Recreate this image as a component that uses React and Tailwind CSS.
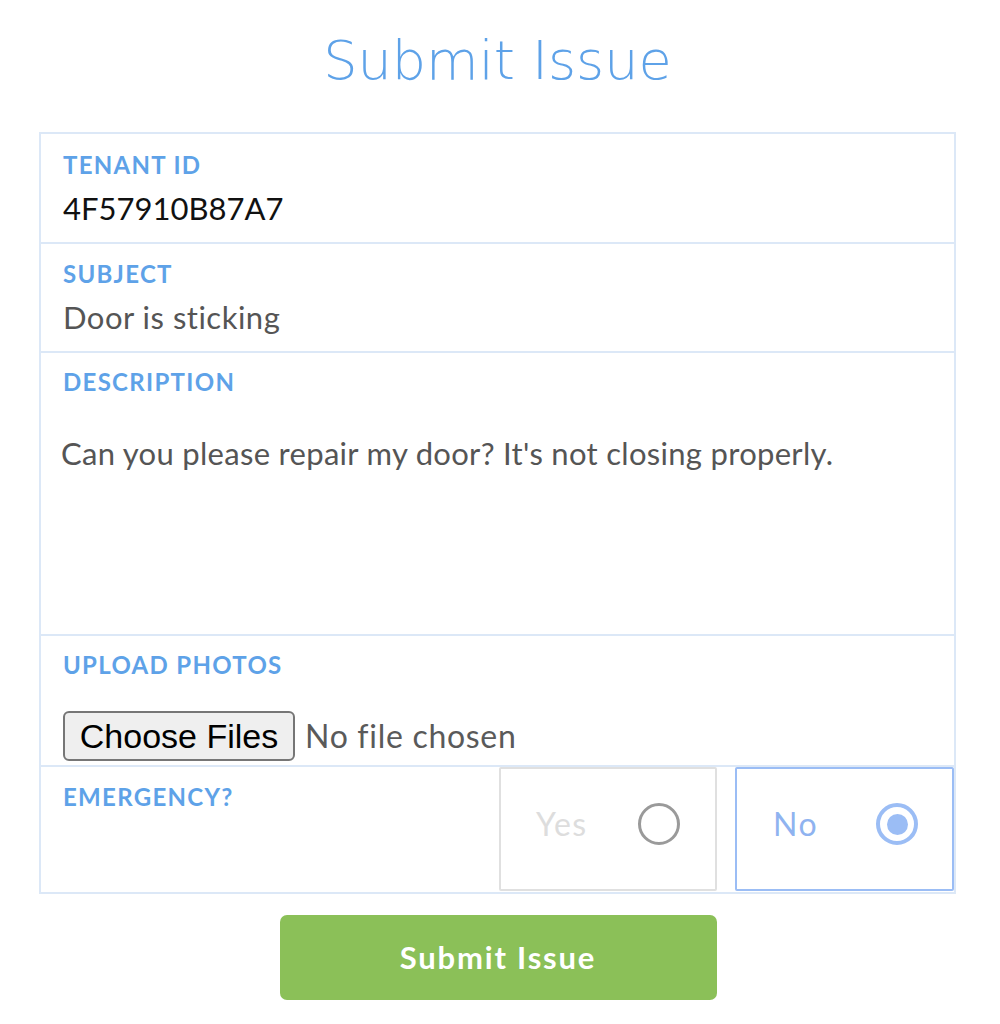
import React, { useState } from 'react';

const font = { fontFamily: 'Lato, "Open Sans", sans-serif' };

const Label = ({ children }) => (
    <div className="text-[24px] leading-[28px] font-bold tracking-[1.3px] text-[#5ea2e8]">{children}</div>
);

const Radio = ({ checked }) =>
    checked ? (
        <span className="w-[42px] h-[42px] rounded-full border-[4px] border-[#9bbdf5] flex items-center justify-center">
            <span className="w-[21px] h-[21px] rounded-full bg-[#9bbdf5]" />
        </span>
    ) : (
        <span className="w-[42px] h-[42px] rounded-full border-[3px] border-[#9a9a9a]" />
    );

const App = () => {
    const [emergency, setEmergency] = useState('no');

    return (
        <div className="w-[1000px] min-h-[1024px] bg-white" style={font}>
            <h1
                className="text-center text-[54px] leading-[68px] font-extralight text-[#5ea2e8] pt-[27px] -ml-[5px]"
                style={{ fontFamily: '"DejaVu Sans", Lato, sans-serif' }}
            >
                Submit Issue
            </h1>

            <form className="mt-[37px] ml-[39px] w-[917px] border-2 border-[#dce8f7]" onSubmit={(e) => e.preventDefault()}>
                <div className="h-[110px] border-b-2 border-[#dce8f7] pl-[22px] pt-[17px]">
                    <Label>TENANT ID</Label>
                    <div className="text-[31px] leading-[40px] text-[#111] mt-[9px]">4F57910B87A7</div>
                </div>

                <div className="h-[109px] border-b-2 border-[#dce8f7] pl-[22px] pt-[16px]">
                    <Label>SUBJECT</Label>
                    <div className="text-[31px] leading-[40px] tracking-[0.5px] text-[#555] mt-[9px]">Door is sticking</div>
                </div>

                <div className="h-[283px] border-b-2 border-[#dce8f7] pl-[22px] pt-[15px]">
                    <Label>DESCRIPTION</Label>
                    <div className="text-[31px] leading-[40px] tracking-[0.3px] text-[#555] mt-[37px] -ml-[2px]">
                        Can you please repair my door? It's not closing properly.
                    </div>
                </div>

                <div className="h-[131px] border-b-2 border-[#dce8f7] pl-[22px] pt-[15px]">
                    <Label>UPLOAD PHOTOS</Label>
                    <div className="flex items-center mt-[32px]">
                        <button
                            type="button"
                            className="h-[50px] w-[232px] bg-[#efefef] border-2 border-[#767676] rounded-[6px] text-[34px] leading-[36px] text-black"
                            style={{ fontFamily: '"Liberation Sans", Arial, sans-serif' }}
                        >
                            Choose Files
                        </button>
                        <span className="ml-[10px] text-[32px] tracking-[0.7px] text-[#5a5a5a]">No file chosen</span>
                    </div>
                </div>

                <div className="h-[125px] flex">
                    <div className="flex-1 pl-[22px] pt-[16px]">
                        <Label>EMERGENCY?</Label>
                    </div>
                    <button
                        type="button"
                        onClick={() => setEmergency('yes')}
                        className={`w-[218px] h-[124px] flex items-center justify-between pl-[35px] pr-[35px] pb-[10px] border-2 rounded-[2px] ${emergency === 'yes' ? 'border-[#9bbdf5]' : 'border-[#e0e0e0]'}`}
                    >
                        <span className={`text-[32px] tracking-[1.5px] ${emergency === 'yes' ? 'text-[#8fb3f0]' : 'text-[#dddddd]'}`}>Yes</span>
                        <Radio checked={emergency === 'yes'} />
                    </button>
                    <button
                        type="button"
                        onClick={() => setEmergency('no')}
                        className={`w-[219px] h-[124px] ml-[18px] flex items-center justify-between pl-[36px] pr-[34px] pb-[10px] border-2 rounded-[2px] ${emergency === 'no' ? 'border-[#9bbdf5]' : 'border-[#e0e0e0]'}`}
                    >
                        <span className={`text-[32px] tracking-[1.5px] ${emergency === 'no' ? 'text-[#8fb3f0]' : 'text-[#dddddd]'}`}>No</span>
                        <Radio checked={emergency === 'no'} />
                    </button>
                </div>
            </form>

            <div className="flex justify-center mt-[21px]">
                <button
                    type="submit"
                    className="w-[437px] h-[85px] -ml-[4px] rounded-[7px] bg-[#8bc058] text-white text-[31px] tracking-[1.8px] font-bold"
                >
                    Submit Issue
                </button>
            </div>
        </div>
    );
};

export default App;
